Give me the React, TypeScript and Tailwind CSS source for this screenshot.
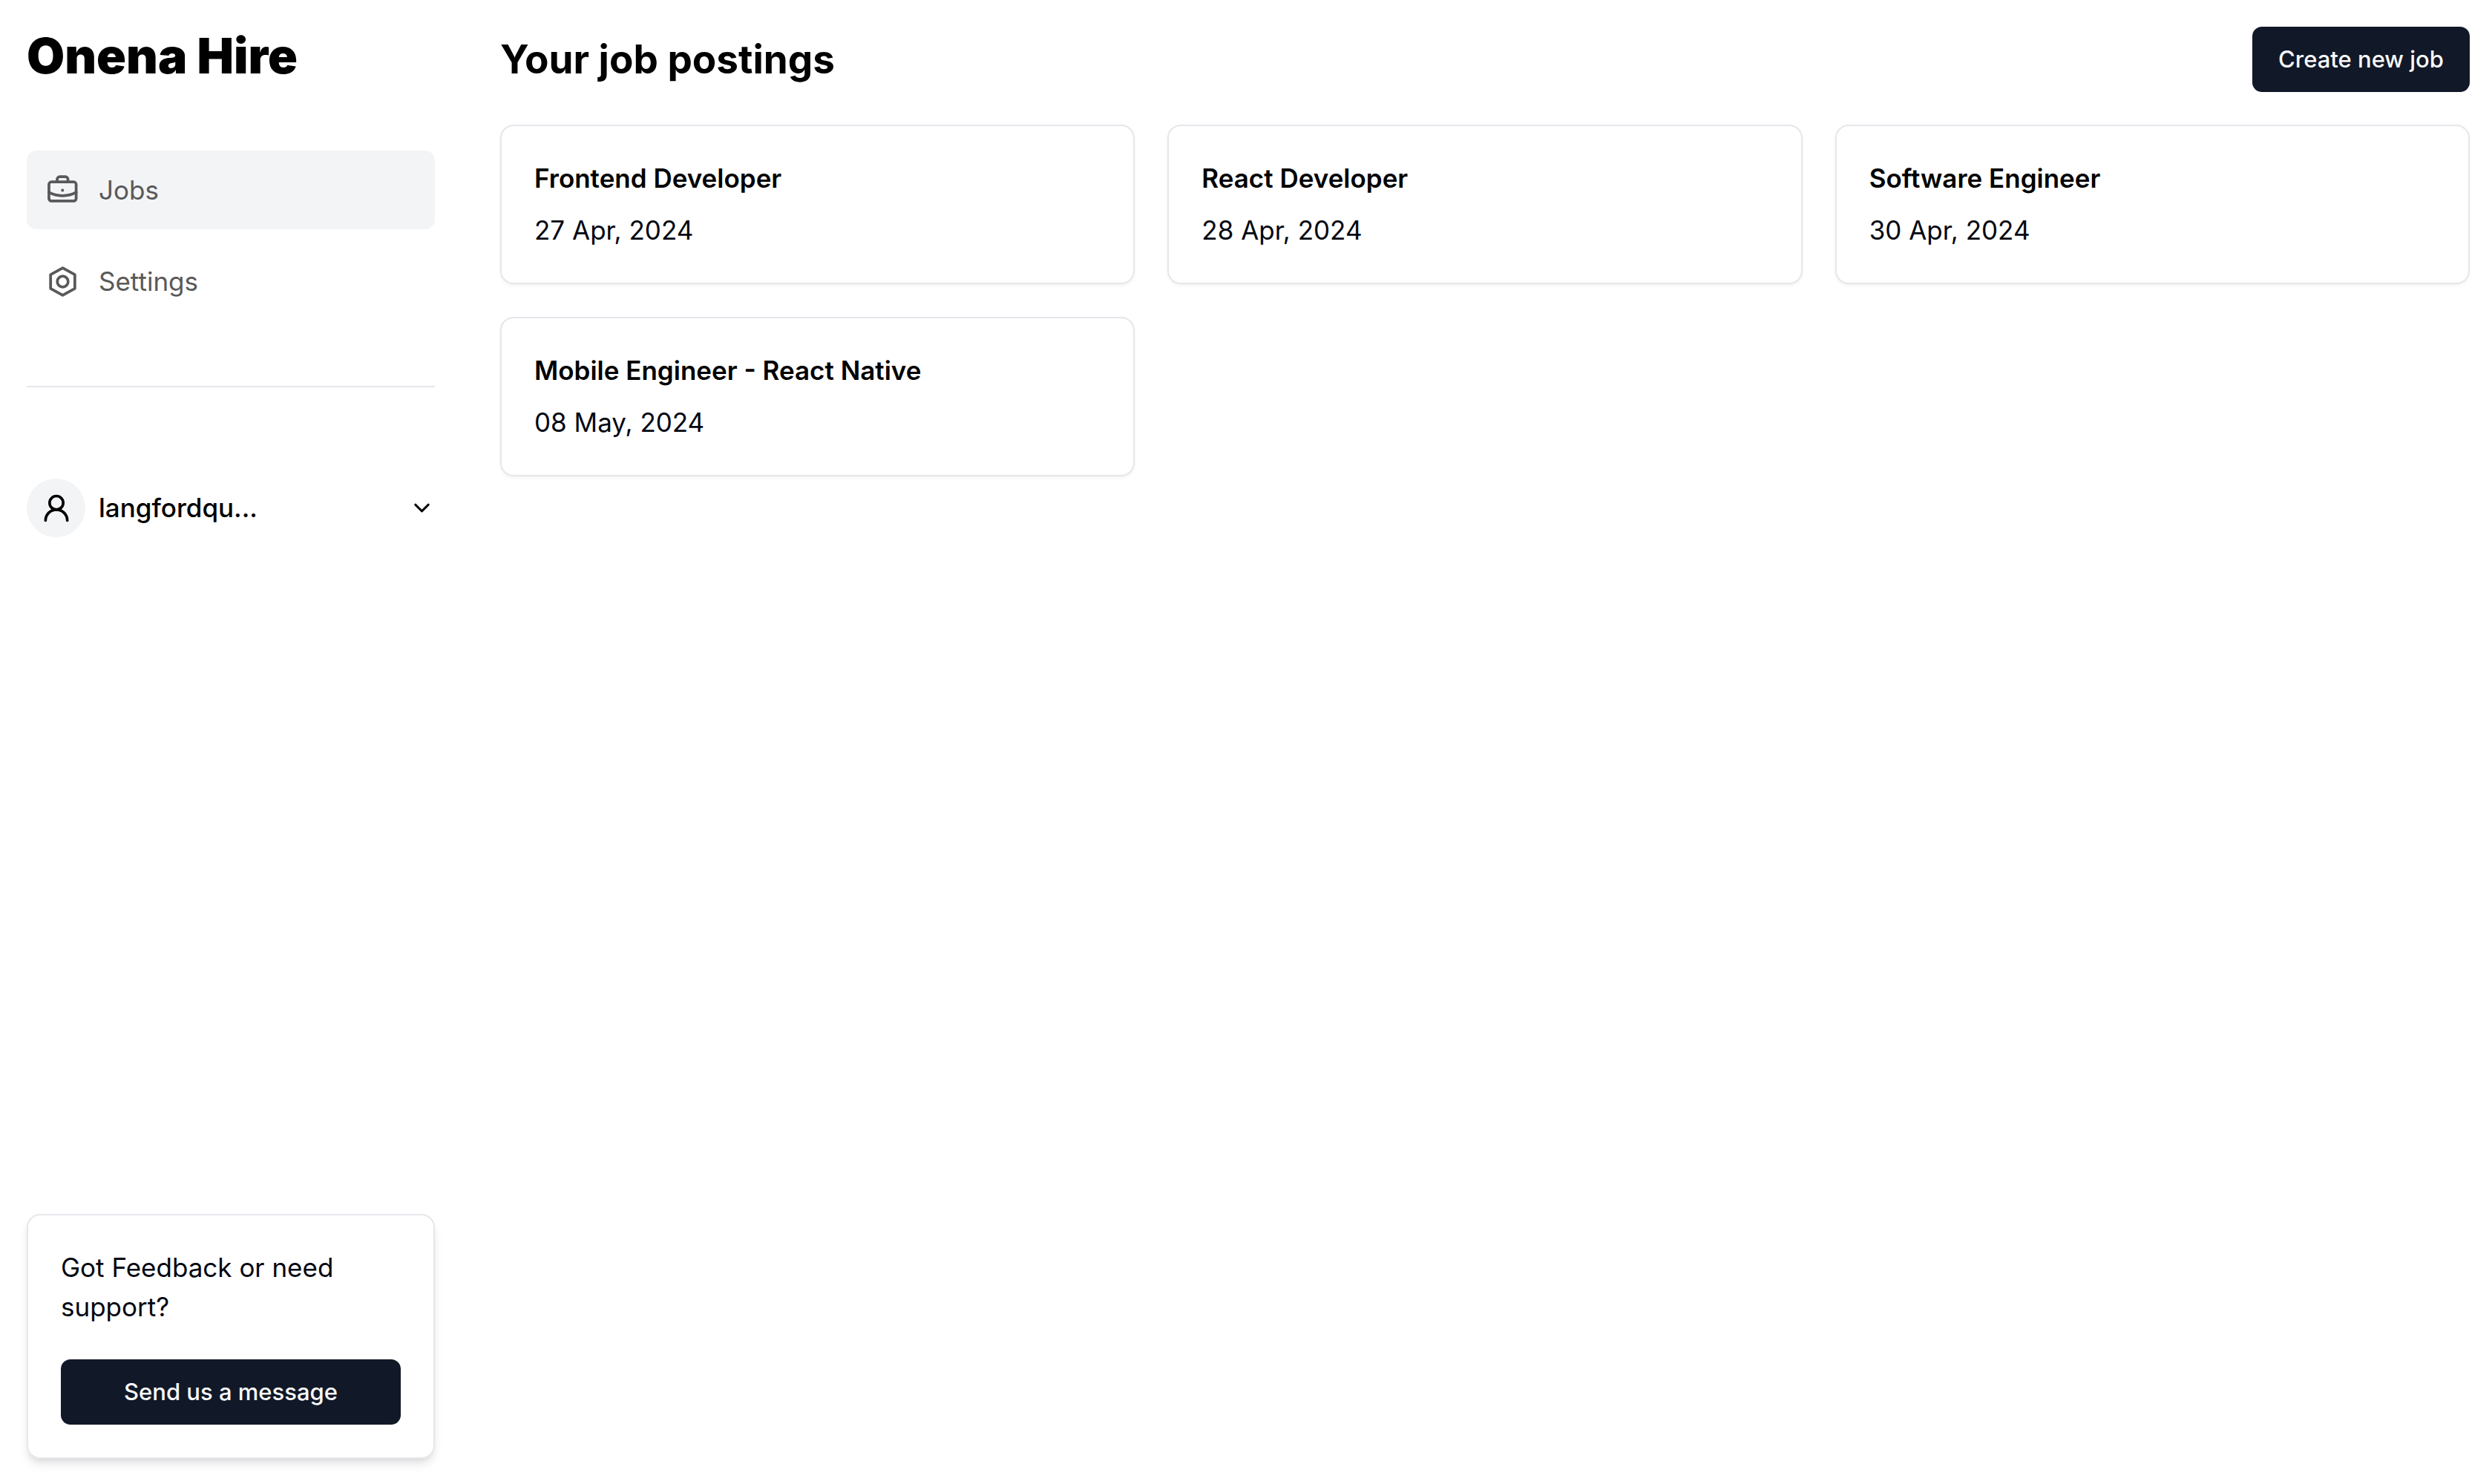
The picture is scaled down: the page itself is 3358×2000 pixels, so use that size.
import React from "react";
import { ChevronDown, UserRound } from "lucide-react";

const jobs = [
  { title: "Frontend Developer", date: "27 Apr, 2024" },
  { title: "React Developer", date: "28 Apr, 2024" },
  { title: "Software Engineer", date: "30 Apr, 2024" },
  { title: "Mobile Engineer - React Native", date: "08 May, 2024" },
];

function NavIcon({ children }: { children: React.ReactNode }) {
  return (
    <svg
      viewBox="0 0 24 24"
      fill="none"
      stroke="currentColor"
      strokeWidth="1.7"
      strokeLinecap="round"
      strokeLinejoin="round"
      aria-hidden="true"
      className="size-[53px] shrink-0"
    >
      {children}
    </svg>
  );
}

function BriefcaseIcon() {
  return (
    <NavIcon>
      <rect x="3.6" y="6.9" width="16.6" height="11.6" rx="1.5" />
      <path d="M8.6 6.900V5.300a1.600 1.600 0 0 1 1.600-1.600h3.400a1.600 1.600 0 0 1 1.600 1.600v1.600" />
      <path d="M3.600 13.200c5 2.800 11.600 2.800 16.600 0" />
      <circle cx="11.900" cy="12" r="0.900" fill="currentColor" stroke="none" />
    </NavIcon>
  );
}

function SettingsIcon() {
  return (
    <NavIcon>
      <path d="M12 3.700l7.400 4.100v8.400L12 20.300l-7.400-4.100V7.800z" />
      <circle cx="12" cy="12" r="3.300" />
    </NavIcon>
  );
}

const primaryButton =
  "h-22 rounded-[13px] bg-[#111827] px-[35px] text-[31px] leading-[44px] font-medium text-gray-50";

function Sidebar() {
  return (
    <aside className="flex w-[550px] shrink-0 flex-col pt-9 pb-[34px]">
      <h1 className="text-[66px] leading-[79px] font-black">Onena Hire</h1>
      <nav className="mt-22 flex flex-col gap-[17px] text-[35px] leading-[53px] text-[#595959]">
        <a href="#jobs" className="flex h-[106px] items-center gap-[22px] rounded-[13px] bg-gray-100 px-[22px]">
          <BriefcaseIcon />
          Jobs
        </a>
        <a href="#settings" className="flex h-[106px] items-center gap-[22px] rounded-[13px] px-[22px]">
          <SettingsIcon />
          Settings
        </a>
      </nav>
      <hr className="mt-22 border-t-2 border-gray-200" />
      <button type="button" className="mt-[123px] flex items-center text-left">
        <span className="flex size-[79px] shrink-0 items-center justify-center rounded-full bg-gray-100">
          <UserRound className="size-11" aria-hidden="true" />
        </span>
        <span className="ml-[18px] flex-1 text-[35px] leading-[53px] font-medium">langfordqu...</span>
        <ChevronDown className="size-[35px]" aria-hidden="true" />
      </button>
      <section className="mt-auto rounded-[18px] border-2 border-gray-200 p-11 text-gray-950 shadow-[0_9px_13px_-2px_rgba(0,0,0,0.1),0_4px_9px_-4px_rgba(0,0,0,0.1)]">
        <p className="text-[35px] leading-[53px]">Got Feedback or need support?</p>
        <button type="button" className={`${primaryButton} mt-11 w-full`}>
          Send us a message
        </button>
      </section>
    </aside>
  );
}

export default function App() {
  return (
    <div className="flex min-h-screen gap-22 bg-white pr-[30px] pl-9 font-[Inter,sans-serif] text-black">
      <Sidebar />
      <main className="min-w-0 flex-1 pt-9">
        <header className="flex items-center justify-between">
          <h2 className="text-[53px] leading-[70px] font-bold">Your job postings</h2>
          <button type="button" className={primaryButton}>
            Create new job
          </button>
        </header>
        <ul className="mt-11 grid grid-cols-3 gap-11">
          {jobs.map((job) => (
            <li
              key={job.title}
              className="rounded-[18px] border-2 border-gray-200 p-11 text-[35px] leading-[53px] text-gray-950 shadow-[0_2px_4px_0_rgba(0,0,0,0.05)]"
            >
              <h3 className="font-semibold text-black">{job.title}</h3>
              <p className="mt-[17px]">{job.date}</p>
            </li>
          ))}
        </ul>
      </main>
    </div>
  );
}
